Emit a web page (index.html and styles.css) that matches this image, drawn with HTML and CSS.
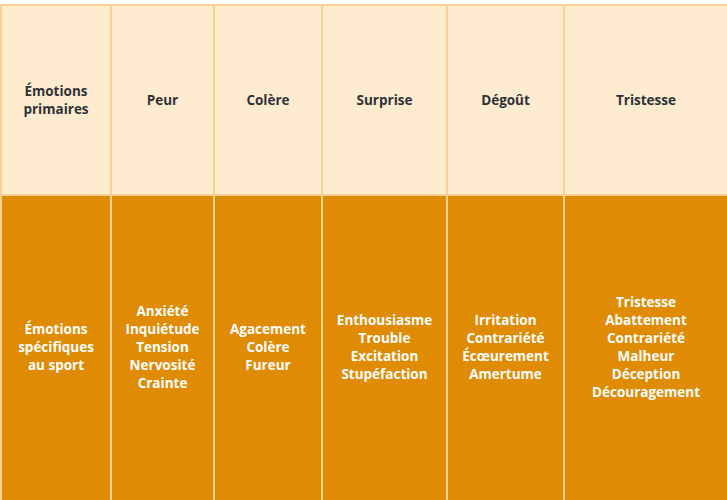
FILE: index.html
```html
<!DOCTYPE html>
<html lang="fr">
<head>
<meta charset="utf-8">
<link rel="stylesheet" href="styles.css">
</head>
<body>
<table class="emo">
  <colgroup>
    <col class="c1"><col class="c2"><col class="c3"><col class="c4"><col class="c5"><col class="c6">
  </colgroup>
  <thead>
    <tr>
      <th>Émotions<br>primaires</th>
      <th>Peur</th>
      <th>Colère</th>
      <th>Surprise</th>
      <th>Dégoût</th>
      <th>Tristesse</th>
    </tr>
  </thead>
  <tbody>
    <tr>
      <td>Émotions<br>spécifiques<br>au sport</td>
      <td>Anxiété<br>Inquiétude<br>Tension<br>Nervosité<br>Crainte</td>
      <td>Agacement<br>Colère<br>Fureur</td>
      <td>Enthousiasme<br>Trouble<br>Excitation<br>Stupéfaction</td>
      <td>Irritation<br>Contrariété<br>Écœurement<br>Amertume</td>
      <td>Tristesse<br>Abattement<br>Contrariété<br>Malheur<br>Déception<br>Découragement</td>
    </tr>
  </tbody>
</table>
</body>
</html>
```
FILE: styles.css
```css
html, body {
  margin: 0;
  padding: 0;
  background: #ffffff;
}
body {
  padding-top: 4px;
  font-family: "Open Sans", "Liberation Sans", sans-serif;
}
.emo {
  border-collapse: collapse;
  table-layout: fixed;
  width: 727px;
}
.c1 { width: 110px; }
.c2 { width: 103px; }
.c3 { width: 108px; }
.c4 { width: 125px; }
.c5 { width: 117px; }
.c6 { width: 164px; }
.emo th, .emo td {
  border: 2px solid #fdd190;
  text-align: center;
  vertical-align: middle;
  font-size: 13.5px;
  line-height: 18px;
  font-weight: 700;
  padding: 0 4px;
}
.emo th {
  background: #ffebcf;
  color: #2c3338;
  height: 188px;
}
.emo td {
  background: #e08b04;
  color: #ffffff;
  height: 302px;
  padding-bottom: 6px;
}
```
